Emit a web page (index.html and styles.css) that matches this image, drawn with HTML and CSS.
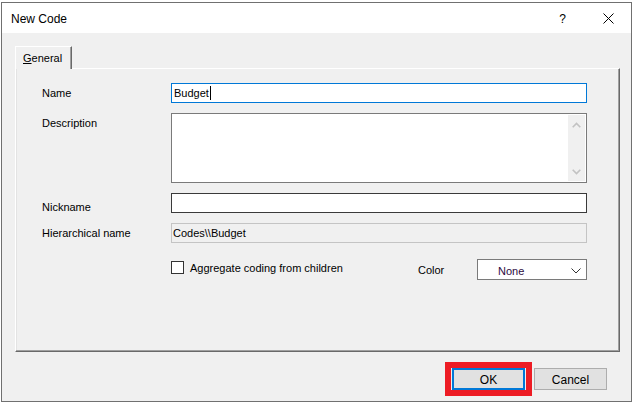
FILE: index.html
```html
<!DOCTYPE html>
<html>
<head>
<meta charset="utf-8">
<link rel="stylesheet" href="styles.css">
</head>
<body>
<div class="dialog">
  <div class="titlebar">
    <span class="title">New Code</span>
    <span class="help">?</span>
    <svg class="close" width="11" height="11" viewBox="0 0 11 11"><path d="M0.5 0.5L10.5 10.5M10.5 0.5L0.5 10.5" stroke="#000" stroke-width="1" fill="none"/></svg>
  </div>
  <div class="client">
    <div class="tabs">
      <div class="tab"><span class="ul">G</span>eneral</div>
    </div>
    <div class="panel">
      <div class="form">
        <div class="lbl">Name</div>
        <div class="field focus"><span class="val">Budget</span><span class="caret"></span></div>

        <div class="lbl top">Description</div>
        <div class="memo">
          <div class="memo-text"></div>
          <div class="sbar">
            <svg width="9" height="6" viewBox="0 0 9 6"><path d="M0.7 5.3L4.5 1.5L8.3 5.3" stroke="#c2c2c2" stroke-width="1.6" fill="none"/></svg>
            <svg width="9" height="6" viewBox="0 0 9 6"><path d="M0.7 0.7L4.5 4.5L8.3 0.7" stroke="#c2c2c2" stroke-width="1.6" fill="none"/></svg>
          </div>
        </div>

        <div class="lbl low">Nickname</div>
        <div class="field dark"></div>

        <div class="lbl">Hierarchical name</div>
        <div class="field ro"><span class="val2">Codes\\Budget</span></div>
      </div>
      <div class="optrow">
        <div class="check"><span class="box"></span><span>Aggregate coding from children</span></div>
        <div class="colorlbl">Color</div>
        <div class="combo"><span class="none">None</span>
          <svg width="10" height="6" viewBox="0 0 10 6"><path d="M0.5 0.5L5 5L9.5 0.5" stroke="#333" stroke-width="1" fill="none"/></svg>
        </div>
      </div>
    </div>
    <div class="buttons">
      <div class="mark"><button class="btn default">OK</button></div>
      <button class="btn">Cancel</button>
    </div>
  </div>
</div>
</body>
</html>
```

FILE: styles.css
```css
html, body {
  margin: 0;
  padding: 0;
  background: #ffffff;
}
body {
  font-family: "Liberation Sans", Arial, sans-serif;
  font-size: 11px;
  color: #000;
}
.dialog {
  margin: 2px 0 0 1px;
  width: 631px;
  height: 400px;
  box-sizing: border-box;
  border: 1px solid #707070;
  background: #f0f0f0;
  display: flex;
  flex-direction: column;
}
.titlebar {
  height: 30px;
  background: #ffffff;
  display: flex;
  align-items: center;
  padding-left: 9px;
  flex: none;
}
.title {
  font-size: 12px;
  flex: 1;
  padding-top: 1px;
}
.help {
  font-size: 12px;
  margin-right: 37px;
  padding-top: 1px;
}
.close {
  margin-right: 17px;
  margin-top: 1px;
}
.client {
  flex: 1;
  padding: 13px 11px 0 13px;
  display: flex;
  flex-direction: column;
}
.tabs {
  display: flex;
  height: 22px;
}
.tab {
  position: relative;
  z-index: 1;
  width: 57px;
  height: 23px;
  box-sizing: border-box;
  border-top: 1px solid #ffffff;
  border-left: 1px solid #ffffff;
  border-right: 1px solid #696969;
  box-shadow: inset -1px 0 0 #a0a0a0;
  background: #f0f0f0;
  padding: 5px 0 0 7px;
  line-height: 13px;
}
.ul { text-decoration: underline; }
.panel {
  height: 284px;
  box-sizing: border-box;
  border-top: 1px solid #ffffff;
  border-left: 1px solid #ffffff;
  border-right: 1px solid #696969;
  border-bottom: 1px solid #696969;
  box-shadow: inset -1px -1px 0 #a0a0a0, inset 1px 0 0 #e3e3e3;
  padding: 14px 0 0 26px;
}
.form {
  display: grid;
  grid-template-columns: 129px 416px;
  row-gap: 10px;
}
.lbl {
  height: 20px;
  line-height: 20px;
}
.lbl.top { align-self: start; }
.lbl.low { padding-top: 4px; box-sizing: border-box; }
.field {
  height: 20px;
  box-sizing: border-box;
  background: #fff;
  border: 1px solid #7a7a7a;
  display: flex;
  align-items: center;
  padding-left: 2px;
}
.field.focus { border-color: #0078d7; }
.field.dark { border-color: #3a3a3a; }
.field.ro {
  background: #f0f0f0;
  border-color: #c4c4c4;
  padding-left: 1px;
}
.caret {
  width: 1px;
  height: 14px;
  background: #000;
  margin-left: 1px;
}
.memo {
  height: 70px;
  box-sizing: border-box;
  border: 1px solid #7a7a7a;
  background: #fff;
  display: flex;
}
.memo-text { flex: 1; }
.sbar {
  width: 17px;
  margin: 1px 1px 1px 0;
  background: #f0f0f0;
  display: flex;
  flex-direction: column;
  align-items: center;
  justify-content: space-between;
  padding: 7px 0 6px;
}
.optrow {
  display: flex;
  align-items: center;
  margin-top: 16px;
  margin-left: 129px;
  height: 21px;
}
.check {
  display: flex;
  align-items: center;
  gap: 6px;
  width: 247px;
  margin-top: -4px;
}
.box {
  width: 13px;
  height: 13px;
  box-sizing: border-box;
  border: 1px solid #333;
  background: #fff;
}
.colorlbl {
  width: 59px;
}
.combo {
  width: 110px;
  height: 21px;
  box-sizing: border-box;
  border: 1px solid #7a7a7a;
  background: #fff;
  display: flex;
  align-items: center;
  justify-content: space-between;
  padding: 2px 5px 0 20px;
}
.none { color: #2c0a3e; }
.buttons {
  display: flex;
  justify-content: flex-end;
  align-items: center;
  gap: 2px;
  margin-top: 10px;
  padding-right: 13px;
}
.mark {
  border: 6px solid #ed1c24;
  padding: 0 1px;
  display: flex;
}
.btn {
  width: 73px;
  height: 22px;
  box-sizing: border-box;
  border: 1px solid #adadad;
  background: #e1e1e1;
  font-family: "Liberation Sans", Arial, sans-serif;
  font-size: 12px;
  color: #000;
  padding: 1px 0 0;
  margin: 0;
}
.btn.default {
  border: 2px solid #0078d7;
}
```
